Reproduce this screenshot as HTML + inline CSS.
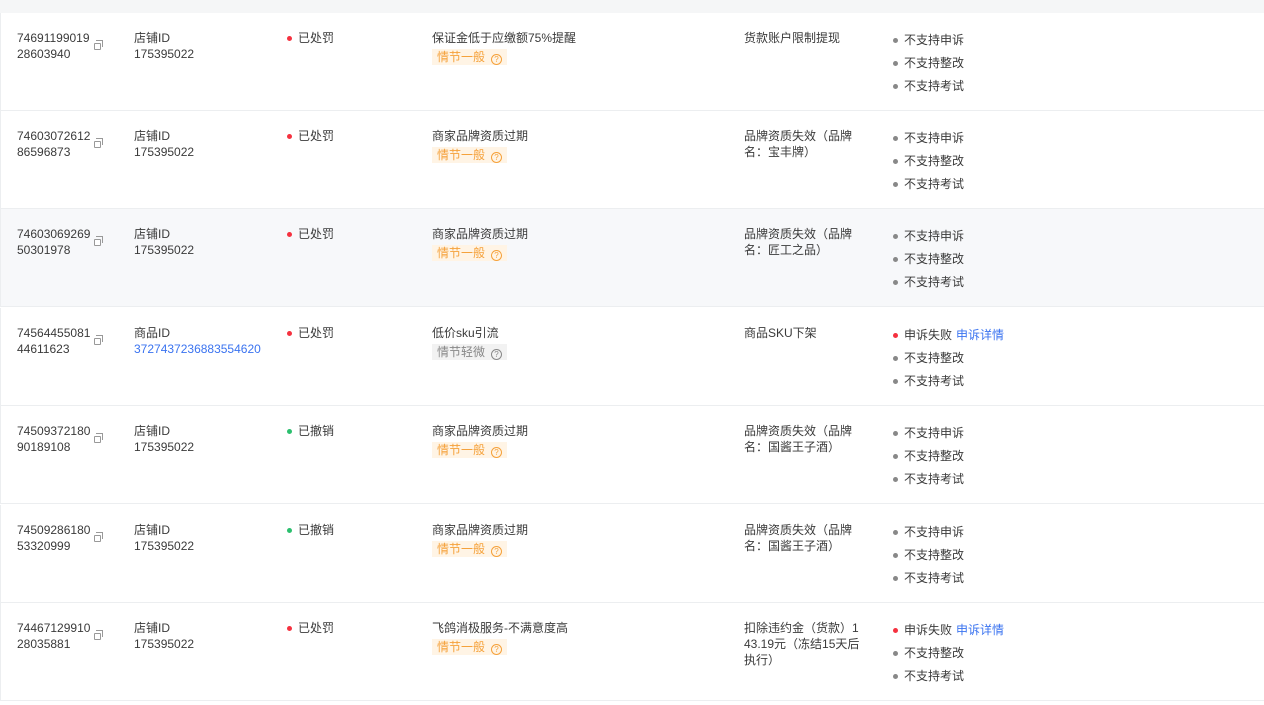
<!DOCTYPE html>
<html><head><meta charset="utf-8"><style>
*{margin:0;padding:0;box-sizing:border-box}
body{width:1264px;height:705px;overflow:hidden;background:#fff;font-family:"Liberation Sans","Noto Sans CJK SC",sans-serif;font-size:12px;color:#3a3a3a;position:relative}
.top{position:absolute;left:0;top:0;width:1264px;height:13px;background:#f5f6f7}
.row{position:absolute;left:0;width:1264px;height:98px;border-bottom:1px solid #eceef0;border-left:1px solid #eceef0}
.row.g{background:#f7f8fa}
.c{position:absolute;top:17px;line-height:16px}
.id{left:16px;width:80px;word-break:break-all}
.cp{position:absolute;left:93px;top:30px;width:7px;height:7px;border:1px solid #999;border-radius:1px;background:#fff}
.cp:before{content:"";position:absolute;left:1px;top:-4px;width:6px;height:6px;border-top:1px solid #999;border-right:1px solid #999}
.st{left:133px}
.st a{color:#3a73f0}
.stat{left:297px}
.dot{position:absolute;width:5px;height:5px;border-radius:50%;left:-11px;top:6px}
.red{background:#f5313f}.grn{background:#2bbf6e}.gry{background:#888}
.t{left:431px}
.tag{display:inline-block;margin-top:3px;height:16px;line-height:16px;padding:0 5px;background:#fff4e5;color:#f5a13a}
.tag.s{background:#f2f2f2;color:#888}
.q{display:inline-block;width:11px;height:11px;border:1px solid currentColor;border-radius:50%;font-size:8px;line-height:9px;text-align:center;margin-left:6px;vertical-align:-1px}
.r{left:743px;width:112px}
.ap{left:903px;top:19px}
.ap div{position:relative;height:23px;line-height:16px}
.ap a{color:#3a73f0;margin-left:4px}
</style></head><body>
<div class="top"></div>

<div class="row" style="top:13px">
<div class="c id">74691199019 28603940</div><div class="cp"></div>
<div class="c st">店铺ID<br>175395022</div>
<div class="c stat"><span class="dot red"></span>已处罚</div>
<div class="c t">保证金低于应缴额75%提醒<br><span class="tag">情节一般<span class="q">?</span></span></div>
<div class="c r">货款账户限制提现</div>
<div class="c ap"><div><span class="dot gry"></span>不支持申诉</div><div><span class="dot gry"></span>不支持整改</div><div><span class="dot gry"></span>不支持考试</div></div>
</div>

<div class="row" style="top:111px">
<div class="c id">74603072612 86596873</div><div class="cp"></div>
<div class="c st">店铺ID<br>175395022</div>
<div class="c stat"><span class="dot red"></span>已处罚</div>
<div class="c t">商家品牌资质过期<br><span class="tag">情节一般<span class="q">?</span></span></div>
<div class="c r">品牌资质失效（品牌名：宝丰牌）</div>
<div class="c ap"><div><span class="dot gry"></span>不支持申诉</div><div><span class="dot gry"></span>不支持整改</div><div><span class="dot gry"></span>不支持考试</div></div>
</div>

<div class="row g" style="top:209px">
<div class="c id">74603069269 50301978</div><div class="cp"></div>
<div class="c st">店铺ID<br>175395022</div>
<div class="c stat"><span class="dot red"></span>已处罚</div>
<div class="c t">商家品牌资质过期<br><span class="tag">情节一般<span class="q">?</span></span></div>
<div class="c r">品牌资质失效（品牌名：匠工之品）</div>
<div class="c ap"><div><span class="dot gry"></span>不支持申诉</div><div><span class="dot gry"></span>不支持整改</div><div><span class="dot gry"></span>不支持考试</div></div>
</div>

<div class="row" style="top:308px">
<div class="c id">74564455081 44611623</div><div class="cp"></div>
<div class="c st">商品ID<br><a>3727437236883554620</a></div>
<div class="c stat"><span class="dot red"></span>已处罚</div>
<div class="c t">低价sku引流<br><span class="tag s">情节轻微<span class="q">?</span></span></div>
<div class="c r">商品SKU下架</div>
<div class="c ap"><div><span class="dot red"></span>申诉失败<a>申诉详情</a></div><div><span class="dot gry"></span>不支持整改</div><div><span class="dot gry"></span>不支持考试</div></div>
</div>

<div class="row" style="top:406px">
<div class="c id">74509372180 90189108</div><div class="cp"></div>
<div class="c st">店铺ID<br>175395022</div>
<div class="c stat"><span class="dot grn"></span>已撤销</div>
<div class="c t">商家品牌资质过期<br><span class="tag">情节一般<span class="q">?</span></span></div>
<div class="c r">品牌资质失效（品牌名：国酱王子酒）</div>
<div class="c ap"><div><span class="dot gry"></span>不支持申诉</div><div><span class="dot gry"></span>不支持整改</div><div><span class="dot gry"></span>不支持考试</div></div>
</div>

<div class="row" style="top:505px">
<div class="c id">74509286180 53320999</div><div class="cp"></div>
<div class="c st">店铺ID<br>175395022</div>
<div class="c stat"><span class="dot grn"></span>已撤销</div>
<div class="c t">商家品牌资质过期<br><span class="tag">情节一般<span class="q">?</span></span></div>
<div class="c r">品牌资质失效（品牌名：国酱王子酒）</div>
<div class="c ap"><div><span class="dot gry"></span>不支持申诉</div><div><span class="dot gry"></span>不支持整改</div><div><span class="dot gry"></span>不支持考试</div></div>
</div>

<div class="row" style="top:603px">
<div class="c id">74467129910 28035881</div><div class="cp"></div>
<div class="c st">店铺ID<br>175395022</div>
<div class="c stat"><span class="dot red"></span>已处罚</div>
<div class="c t">飞鸽消极服务-不满意度高<br><span class="tag">情节一般<span class="q">?</span></span></div>
<div class="c r" style="width:118px">扣除违约金（货款）1<br>43.19元（冻结15天后<br>执行）</div>
<div class="c ap"><div><span class="dot red"></span>申诉失败<a>申诉详情</a></div><div><span class="dot gry"></span>不支持整改</div><div><span class="dot gry"></span>不支持考试</div></div>
</div>
</body></html>
